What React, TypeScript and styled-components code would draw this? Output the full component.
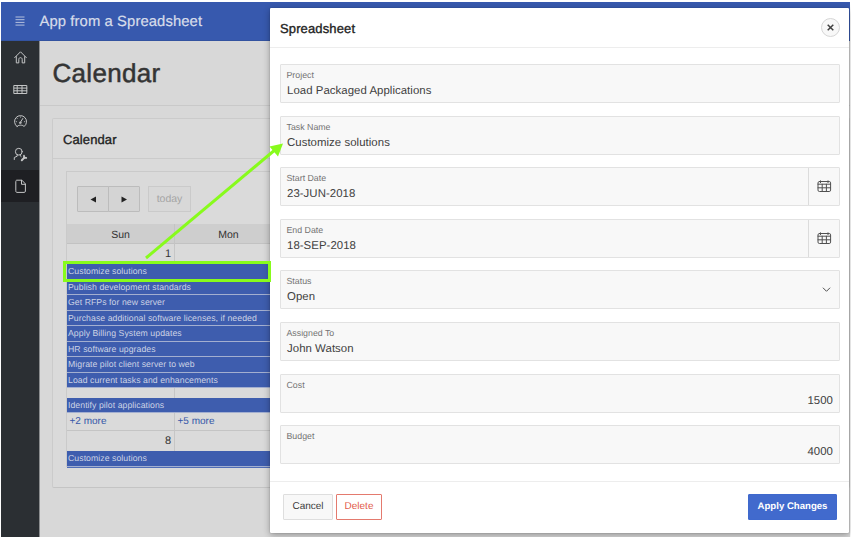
import React from "react";
import styled, { createGlobalStyle, css } from "styled-components";

const GlobalStyle = createGlobalStyle`
  *, *::before, *::after { box-sizing: border-box; }
  body {
    margin: 0;
    overflow: hidden;
    background: #fff;
    font-family: "Liberation Sans", Arial, sans-serif;
    text-rendering: geometricPrecision;
  }
  button { font-family: inherit; padding: 0; margin: 0; text-rendering: inherit; }
`;

const Page = styled.div`
  position: relative;
  width: 851px;
  height: 537px;
  padding: 2px 1px 0 1px;
  overflow: hidden;
`;
const Shell = styled.div`
  display: grid;
  grid-template: 39px 1fr / 39px 1fr;
  height: 535px;
  background: #d8d8d8;
`;
const TopBar = styled.header`
  grid-column: 1 / -1;
  display: flex;
  align-items: center;
  background: #3759ae;
  border-bottom: 1px solid #3353a0;
`;
const MenuButton = styled.div`
  width: 38px;
  display: flex;
  justify-content: center;
`;
const AppTitle = styled.div`
  padding: 2px 0 0 0.5px;
  font-size: 14.8px;
  letter-spacing: 0.1px;
  color: #d7ddea;
  -webkit-text-stroke: 0.2px #d7ddea;
`;
const SideNav = styled.nav`
  display: flex;
  flex-direction: column;
  background: #2b2f33;
  border-right: 1px solid #8b8d8f;
`;
const NavItem = styled.a<{ $active?: boolean }>`
  height: 32.3px;
  display: flex;
  align-items: center;
  justify-content: center;
  background: ${(p) => (p.$active ? "#1e1f23" : "transparent")};
`;
const Main = styled.main`
  display: flex;
  flex-direction: column;
  min-width: 0;
  overflow: hidden;
`;
const PageTitle = styled.h1`
  flex: none;
  height: 65px;
  margin: 0;
  padding: 2px 0 0 12.5px;
  line-height: 61px;
  font-size: 26px;
  font-weight: 400;
  letter-spacing: 0.3px;
  color: #343434;
  -webkit-text-stroke: 0.5px #343434;
  border-bottom: 1px solid #c9c9c9;
`;
const Card = styled.section`
  flex: none;
  height: 370px;
  margin: 12px 0 0 12px;
  border: 1px solid #cbcbcb;
  border-bottom-color: #c4c4c4;
  border-radius: 2px;
  background: #dadada;
`;
const CardTitle = styled.h2`
  height: 40px;
  margin: 0;
  padding-left: 10px;
  line-height: 42px;
  font-size: 13px;
  font-weight: 400;
  letter-spacing: 0.1px;
  color: #222;
  -webkit-text-stroke: 0.35px #222;
  border-bottom: 1px solid #cbcbcb;
`;
const CalendarBox = styled.div`
  margin: 12px 0 0 13px;
  height: 296px;
  border: 1px solid #cacaca;
  border-right: 0;
  border-bottom: 0;
`;
const Toolbar = styled.div`
  display: flex;
  height: 52px;
  padding: 14px 0 0 10px;
`;
const toolButton = css`
  height: 26px;
  display: flex;
  align-items: center;
  justify-content: center;
  border: 1px solid #bcbcbc;
  background: #d4d4d4;
`;
const StepButton = styled.button<{ $last?: boolean }>`
  ${toolButton}
  width: 32px;
  margin-left: ${(p) => (p.$last ? "-1px" : "0")};
  border-radius: ${(p) => (p.$last ? "0 1px 1px 0" : "1px 0 0 1px")};
`;
const TodayButton = styled.button`
  ${toolButton}
  width: 43px;
  margin-left: 8px;
  border-color: #cacaca;
  background: #d8d8d8;
  color: #a5a5a5;
  font-size: 10.5px;
`;
const Weekdays = styled.div`
  display: grid;
  grid-template-columns: 108px 108px;
  height: 20px;
  line-height: 22px;
  background: #cecece;
  border-bottom: 1px solid #c2c2c2;
  font-size: 10.5px;
  text-align: center;
  color: #333;
`;
const Weekday = styled.div`
  border-right: 1px solid #c4c4c4;
`;
const Week = styled.div<{ $height: number; $line?: boolean }>`
  height: ${(p) => p.$height}px;
  overflow: hidden;
  border-bottom: ${(p) => (p.$line ? "1px solid #c4c4c4" : "0")};
  background: linear-gradient(#c6c6c6, #c6c6c6) 107px 0 / 1px 100% no-repeat;
`;
const DayNumber = styled.div`
  width: 108px;
  height: 20px;
  padding-right: 4px;
  line-height: 21px;
  font-size: 11px;
  text-align: right;
  color: #333;
`;
const EventBar = styled.div<{ $gap?: number }>`
  height: 15.5px;
  margin-top: ${(p) => p.$gap ?? 0}px;
  padding-left: 1px;
  line-height: 14px;
  white-space: nowrap;
  font-size: 8.7px;
  letter-spacing: 0.06px;
  color: #ccd3e5;
  background: #3e5dae;
  border-bottom: 1px solid #a3afd0;
`;
const MoreRow = styled.div`
  display: grid;
  grid-template-columns: 108px 108px;
  line-height: 18px;
  padding-left: 2.5px;
  font-size: 10px;
  color: #3557a8;
`;
const Clipped = styled.div`
  height: 2px;
  background: #506db6;
`;

const Dialog = styled.div`
  position: absolute;
  left: 270px;
  top: 8px;
  width: 579px;
  height: 525px;
  display: flex;
  flex-direction: column;
  background: #fff;
  border-radius: 1px;
  box-shadow: 0 0 1px rgba(0, 0, 0, 0.45), 0 2px 7px rgba(0, 0, 0, 0.32);
`;
const DialogHeader = styled.div`
  flex: none;
  height: 40px;
  padding: 0 9px 0 10px;
  display: flex;
  align-items: center;
  justify-content: space-between;
  border-bottom: 1px solid #ededed;
`;
const DialogTitle = styled.h2`
  margin: 1px 0 0;
  font-size: 13px;
  font-weight: 400;
  letter-spacing: 0.13px;
  color: #222;
  -webkit-text-stroke: 0.35px #222;
`;
const CloseButton = styled.button`
  width: 19px;
  height: 19px;
  display: flex;
  align-items: center;
  justify-content: center;
  border: 1px solid #d6d6d6;
  border-radius: 50%;
  background: #f8f8f8;
`;
const Form = styled.div`
  flex: 1;
  display: flex;
  flex-direction: column;
  gap: 12.6px;
  padding: 16px 9px 0 10px;
`;
const Field = styled.div`
  height: 39px;
  flex: none;
  display: flex;
  border: 1px solid #e2e2e2;
  border-radius: 1px;
  background: #f8f8f8;
`;
const FieldBody = styled.div`
  flex: 1;
  padding: 4px 6px 0 5.5px;
`;
const Label = styled.div`
  height: 13px;
  line-height: 13px;
  font-size: 8.8px;
  color: #737373;
`;
const Value = styled.div<{ $numeric?: boolean }>`
  height: 19px;
  padding-left: 0.5px;
  line-height: 19px;
  font-size: 11.4px;
  letter-spacing: 0.05px;
  color: #404040;
  text-align: ${(p) => (p.$numeric ? "right" : "left")};
`;
const Addon = styled.div<{ $divided?: boolean }>`
  width: ${(p) => (p.$divided ? 31 : 26)}px;
  display: flex;
  align-items: center;
  justify-content: center;
  border-left: ${(p) => (p.$divided ? "1px solid #dcdcdc" : "0")};
`;
const Footer = styled.div`
  flex: none;
  height: 52px;
  display: flex;
  gap: 3px;
  padding: 11.5px 12px 0 13px;
  border-top: 1px solid #ededed;
`;
const ActionButton = styled.button<{ $kind: "plain" | "danger" | "primary" }>`
  height: 26px;
  border: 1px solid #dedede;
  border-radius: 1px;
  background: #f8f8f8;
  color: #404040;
  font-size: 10px;
  width: 50px;
  ${(p) =>
    p.$kind === "danger" &&
    css`
      width: 46px;
      border-color: #e47a6e;
      background: #fff;
      color: #e25b4b;
    `}
  ${(p) =>
    p.$kind === "primary" &&
    css`
      width: 89px;
      margin-left: auto;
      border-color: #3f69cd;
      background: #416acd;
      color: #fff;
      font-size: 9.6px;
      font-weight: 700;
    `}
`;

const Highlight = styled.div`
  position: absolute;
  left: 63px;
  top: 261px;
  width: 208px;
  height: 21px;
  border: 3px solid #88fb1c;
`;
const Arrow = styled.svg`
  position: absolute;
  left: 0;
  top: 0;
  pointer-events: none;
`;

const Glyph = ({ w = 15, h = 15, color = "#c4c5c6", children }: {
  w?: number; h?: number; color?: string; children: React.ReactNode;
}) => (
  <svg width={w} height={h} viewBox={`0 0 ${w} ${h}`} fill="none" stroke={color}
    strokeWidth="1" strokeLinecap="round" strokeLinejoin="round">
    {children}
  </svg>
);
const CalendarIcon = () => (
  <Glyph color="#505050">
    <rect x="1" y="2.5" width="12.6" height="10" rx="1.4" />
    <path d="M1 5.2h12.6M1 8.8h12.6M5.2 5.2v7.3M9.4 5.2v7.3M3.5 1.8v1.8M11 1.8v1.8" />
  </Glyph>
);

const weekOne = [
  "Customize solutions",
  "Publish development standards",
  "Get RFPs for new server",
  "Purchase additional software licenses, if needed",
  "Apply Billing System updates",
  "HR software upgrades",
  "Migrate pilot client server to web",
  "Load current tasks and enhancements",
];

type FieldData = { label: string; value: string; kind?: "date" | "select" | "number" };
const fields: FieldData[] = [
  { label: "Project", value: "Load Packaged Applications" },
  { label: "Task Name", value: "Customize solutions" },
  { label: "Start Date", value: "23-JUN-2018", kind: "date" },
  { label: "End Date", value: "18-SEP-2018", kind: "date" },
  { label: "Status", value: "Open", kind: "select" },
  { label: "Assigned To", value: "John Watson" },
  { label: "Cost", value: "1500", kind: "number" },
  { label: "Budget", value: "4000", kind: "number" },
];

export default function App() {
  return (
    <Page>
      <GlobalStyle />
      <Shell>
        <TopBar>
          <MenuButton>
            <Glyph w={10} h={10} color="#b4c0dd">
              <path d="M.5 1h9M.5 3.7h9M.5 6.4h9M.5 9.1h9" strokeLinecap="butt" />
            </Glyph>
          </MenuButton>
          <AppTitle>App from a Spreadsheet</AppTitle>
        </TopBar>
        <SideNav>
          <NavItem>
            <Glyph>
              <path d="M1.7 7.6 7.5 1.8l5.8 5.8M3.3 6.6v6.3h2.5V9.3c0-2.2 3.4-2.2 3.4 0v3.6h2.5V6.6" />
            </Glyph>
          </NavItem>
          <NavItem>
            <Glyph>
              <rect x="1.2" y="3.5" width="12.6" height="8" />
              <path d="M1.2 6.1h12.6M1.2 8.8h12.6M4.2 3.5v8M9 3.5v8" />
            </Glyph>
          </NavItem>
          <NavItem>
            <Glyph>
              <path d="M4 12.5a6 6 0 1 1 7 0c-.4-1.8-6.6-1.8-7 0Z" />
              <path d="m7.5 8.2 2.3-3.7M7.5 3v.1M4.300 4.600l.1.1M3.300 7.700h.1M11.600 7.700h.1" />
              <circle cx="7.2" cy="8.8" r=".8" />
            </Glyph>
          </NavItem>
          <NavItem>
            <Glyph>
              <circle cx="5.800" cy="4.700" r="3.400" />
              <path d="M4.200 7.900v1.300L1.300 10.500v2M7.300 7.900v1l.8.6" />
              <path d="m8.800 13.300 2.800-2.900" strokeWidth="2" />
              <path d="M11 8.700v2.200h2.300" strokeWidth="1.700" />
            </Glyph>
          </NavItem>
          <NavItem $active>
            <Glyph>
              <path d="M2.800 2.300c0-.7.400-1.100 1.100-1.100h5l3.500 3.700v7.200c0 .8-.4 1.300-1.200 1.300H4c-.8 0-1.200-.5-1.200-1.300ZM8.500 1.300v4h3.900" />
            </Glyph>
          </NavItem>
        </SideNav>
        <Main>
          <PageTitle>Calendar</PageTitle>
          <Card>
            <CardTitle>Calendar</CardTitle>
            <CalendarBox>
              <Toolbar>
                <StepButton>
                  <svg width="6" height="7"><path d="M6 .5v6L.5 3.500Z" fill="#222" /></svg>
                </StepButton>
                <StepButton $last>
                  <svg width="6" height="7"><path d="M.5.5v6L6 3.500Z" fill="#222" /></svg>
                </StepButton>
                <TodayButton>today</TodayButton>
              </Toolbar>
              <Weekdays>
                <Weekday>Sun</Weekday>
                <Weekday>Mon</Weekday>
              </Weekdays>
              <Week $height={187} $line>
                <DayNumber>1</DayNumber>
                {weekOne.map((name) => <EventBar key={name}>{name}</EventBar>)}
                <EventBar $gap={9.5}>Identify pilot applications</EventBar>
                <MoreRow>
                  <span>+2 more</span>
                  <span>+5 more</span>
                </MoreRow>
              </Week>
              <Week $height={37}>
                <DayNumber>8</DayNumber>
                <EventBar>Customize solutions</EventBar>
                <Clipped />
              </Week>
            </CalendarBox>
          </Card>
        </Main>
      </Shell>

      <Dialog role="dialog">
        <DialogHeader>
          <DialogTitle>Spreadsheet</DialogTitle>
          <CloseButton aria-label="Close">
            <svg width="7" height="7"><path d="m.7.7 5.600 5.600M6.300.7.7 6.300" stroke="#404040" strokeWidth="1.500" /></svg>
          </CloseButton>
        </DialogHeader>
        <Form>
          {fields.map((f) => (
            <Field key={f.label}>
              <FieldBody>
                <Label>{f.label}</Label>
                <Value $numeric={f.kind === "number"}>{f.value}</Value>
              </FieldBody>
              {f.kind === "date" && <Addon $divided><CalendarIcon /></Addon>}
              {f.kind === "select" && (
                <Addon>
                  <Glyph w={9} h={6} color="#505050"><path d="m1.200 1 3.300 3.300L7.800 1" /></Glyph>
                </Addon>
              )}
            </Field>
          ))}
        </Form>
        <Footer>
          <ActionButton $kind="plain">Cancel</ActionButton>
          <ActionButton $kind="danger">Delete</ActionButton>
          <ActionButton $kind="primary">Apply Changes</ActionButton>
        </Footer>
      </Dialog>

      <Highlight />
      <Arrow width="300" height="270">
        <path d="m146 258 130-109" stroke="#88fb1c" strokeWidth="3" />
        <path d="m283 143.500-13.500 3 8.500 10Z" fill="#88fb1c" />
      </Arrow>
    </Page>
  );
}
